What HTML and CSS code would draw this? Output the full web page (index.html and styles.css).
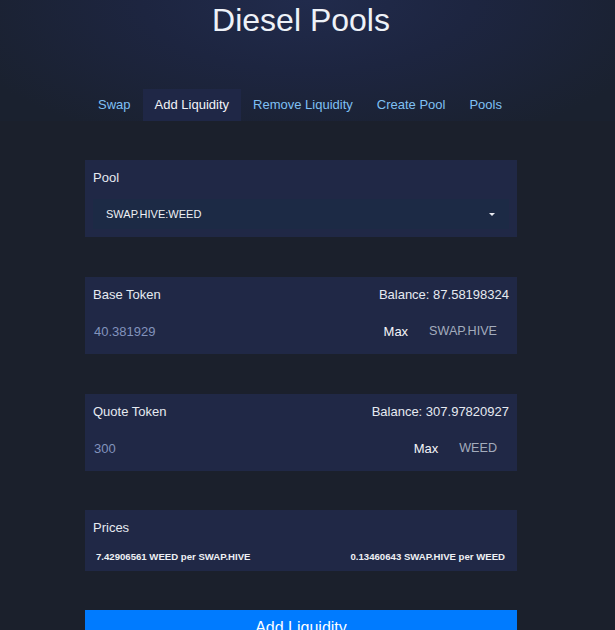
FILE: index.html
```html
<!DOCTYPE html>
<html lang="en">
<head>
  <meta charset="UTF-8" />
  <meta name="viewport" content="width=device-width, initial-scale=1.0"/>
  <title>Diesel Pools</title>
  <link rel="stylesheet" href="styles.css">
</head>
<body>
  <header class="header">
    <div class="wrap">
      <h1>Diesel Pools</h1>
      <nav class="nav">
        <a href="#">Swap</a>
        <a href="#" class="active">Add Liquidity</a>
        <a href="#">Remove Liquidity</a>
        <a href="#">Create Pool</a>
        <a href="#">Pools</a>
      </nav>
    </div>
  </header>

  <main class="wrap">
    <div class="container">
      <div class="card">
        <div class="card-head">
          <span>Pool</span>
        </div>
        <div class="select">
          <span>SWAP.HIVE:WEED</span>
          <span class="caret"></span>
        </div>
      </div>

      <div class="card">
        <div class="card-head">
          <span>Base Token</span>
          <span>Balance: 87.58198324</span>
        </div>
        <div class="input-row">
          <span class="amount">40.381929</span>
          <span class="max">Max</span>
          <span class="token">SWAP.HIVE</span>
        </div>
      </div>

      <div class="card">
        <div class="card-head">
          <span>Quote Token</span>
          <span>Balance: 307.97820927</span>
        </div>
        <div class="input-row">
          <span class="amount">300</span>
          <span class="max">Max</span>
          <span class="token">WEED</span>
        </div>
      </div>

      <div class="card prices">
        <div class="card-head">
          <span>Prices</span>
        </div>
        <div class="price-row">
          <span>7.42906561 WEED per SWAP.HIVE</span>
          <span>0.13460643 SWAP.HIVE per WEED</span>
        </div>
      </div>

      <button class="btn">Add Liquidity</button>
    </div>
  </main>
</body>
</html>
```

FILE: styles.css
```css
body {
  margin: 0;
  font-family: "Liberation Sans", Arial, sans-serif;
  font-size: 13px;
  color: #e6eaf1;
  background: #1b202c;
}
.wrap {
  width: 602px;
}
.header {
  background: radial-gradient(ellipse 60% 130% at 50% 0%, #212b4c 0%, #1d2540 45%, #1a212f 100%);
  padding-top: 2px;
}
h1 {
  margin: 0;
  text-align: center;
  font-size: 32px;
  font-weight: normal;
  line-height: 37px;
  color: #eef2f8;
}
.nav {
  display: flex;
  justify-content: center;
  margin-top: 50px;
  padding-right: 2px;
}
.nav a {
  display: block;
  padding: 8px 12px;
  line-height: 16px;
  color: #7fc0f4;
  text-decoration: none;
}
.nav a.active {
  background: #1f2746;
  color: #f2f4f8;
}
.container {
  width: 432px;
  margin: 0 auto;
  padding-top: 39px;
  display: flex;
  flex-direction: column;
  gap: 40px;
}
.card {
  background: #202846;
  padding: 8px;
}
.card-head {
  display: flex;
  justify-content: space-between;
  line-height: 19px;
}
.select {
  margin-top: 12px;
  height: 30px;
  background: #1c2a45;
  display: flex;
  align-items: center;
  justify-content: space-between;
  padding: 0 13px;
  font-size: 11px;
  color: #eef0f4;
}
.caret {
  width: 0;
  height: 0;
  border-left: 3.5px solid transparent;
  border-right: 3.5px solid transparent;
  border-top: 3.5px solid #e8eaf0;
  margin-right: 1px;
}
.input-row {
  margin-top: 12px;
  height: 30px;
  display: flex;
  align-items: center;
}
.amount {
  flex: 1;
  padding-left: 1px;
  color: #8293bd;
}
.max {
  color: #f4f5f8;
}
.token {
  color: #a3acbd;
  padding: 0 12px 0 21px;
  font-size: 12.6px;
}
.prices {
  margin-top: -1px;
  padding-bottom: 6px;
}
.price-row {
  display: flex;
  justify-content: space-between;
  margin-top: 12px;
  padding: 0 4px 0 3px;
  line-height: 16px;
  font-size: 9.6px;
  font-weight: bold;
  color: #eef0f4;
}
.btn {
  margin-top: -1px;
  border: none;
  background: #007bff;
  color: #ffffff;
  font-family: "Liberation Sans", Arial, sans-serif;
  font-size: 16px;
  line-height: 24px;
  padding: 6px 12px;
}
```
